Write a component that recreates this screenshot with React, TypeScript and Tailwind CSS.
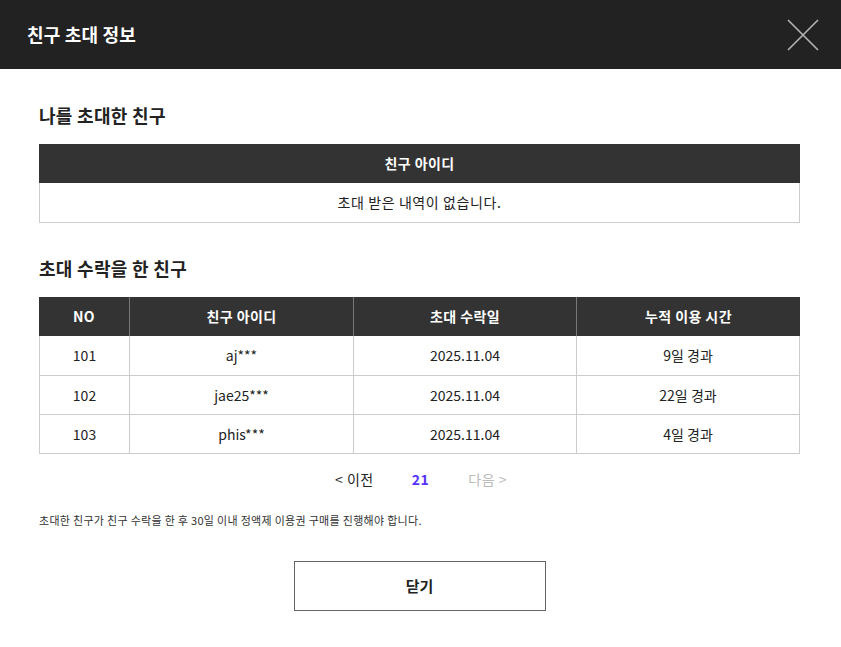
const font = { fontFamily: '"Noto Sans CJK KR", "Noto Sans", sans-serif' };

const rows = [
  { no: 101, id: "aj***", date: "2025.11.04", used: "9일 경과" },
  { no: 102, id: "jae25***", date: "2025.11.04", used: "22일 경과" },
  { no: 103, id: "phis***", date: "2025.11.04", used: "4일 경과" },
];

function CloseIcon() {
  return (
    <svg width="32" height="32" viewBox="0 0 32 32" fill="none">
      <path d="M1 1L31 31M31 1L1 31" stroke="#b5b5b5" strokeWidth="1.6" />
    </svg>
  );
}

export default function App() {
  return (
    <div className="w-[841px] h-[647px] bg-white text-[#222]" style={font}>
      <div className="h-[69px] bg-[#222222] flex items-center justify-between pl-[27px] pr-[22px]">
        <h1 className="text-white text-[18px] font-bold tracking-[0.2px]">친구 초대 정보</h1>
        <CloseIcon />
      </div>

      <div className="ml-[39px] w-[761px]">
        <h2 className="mt-[33px] text-[18px] leading-[26px] font-bold tracking-[0.3px]">나를 초대한 친구</h2>
        <div className="mt-[16px] border-x border-b border-[#cccccc]">
          <div className="h-[39px] bg-[#333333] -mx-px flex items-center justify-center text-white text-[14px] font-bold tracking-[0.4px]">
            친구 아이디
          </div>
          <div className="h-[39px] flex items-center justify-center text-[14px] tracking-[0.6px]">
            초대 받은 내역이 없습니다.
          </div>
        </div>

        <h2 className="mt-[32px] text-[18px] leading-[26px] font-bold tracking-[0.3px]">초대 수락을 한 친구</h2>
        <div className="mt-[16px] border-x border-b border-[#cccccc]">
          <div className="h-[39px] bg-[#333333] -mx-px grid grid-cols-[90px_224px_223px_1fr] text-white text-[14px] font-bold tracking-[0.4px]">
            <div className="flex items-center justify-center">NO</div>
            <div className="flex items-center justify-center border-l border-[#777]">친구 아이디</div>
            <div className="flex items-center justify-center border-l border-[#777]">초대 수락일</div>
            <div className="flex items-center justify-center border-l border-[#777]">누적 이용 시간</div>
          </div>
          {rows.map((r, i) => (
            <div
              key={r.no}
              className={`h-[39px] grid grid-cols-[89px_224px_223px_1fr] text-[14px] ${i > 0 ? "border-t border-[#cccccc]" : ""}`}
            >
              <div className="flex items-center justify-center">{r.no}</div>
              <div className="flex items-center justify-center border-l border-[#cccccc]">{r.id}</div>
              <div className="flex items-center justify-center border-l border-[#cccccc]">{r.date}</div>
              <div className="flex items-center justify-center border-l border-[#cccccc]">{r.used}</div>
            </div>
          ))}
        </div>

        <div className="mt-[15px] flex items-center justify-center text-[14px] h-[20px] tracking-[0.5px] pl-[3px]">
          <span className="text-[#222]">&lt; 이전</span>
          <span className="ml-[38px] text-[#5533ff] font-semibold">21</span>
          <span className="ml-[39px] text-[#bbbbbb]">다음 &gt;</span>
        </div>

        <p className="mt-[23px] text-[11px] text-[#333] leading-[16px] tracking-[0.3px]">
          초대한 친구가 친구 수락을 한 후 30일 이내 정액제 이용권 구매를 진행해야 합니다.
        </p>

        <div className="mt-[33px] flex justify-center">
          <button className="w-[252px] h-[50px] border border-[#666666] bg-white text-[15px] font-bold text-[#222]">
            닫기
          </button>
        </div>
      </div>
    </div>
  );
}
